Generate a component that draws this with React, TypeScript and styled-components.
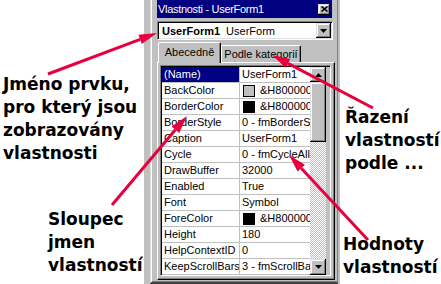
import React from "react";
import styled, { createGlobalStyle } from "styled-components";

const Global = createGlobalStyle`
  html, body { margin: 0; padding: 0; background: #fff; }
`;

const Page = styled.div`
  position: relative;
  width: 441px;
  height: 284px;
  display: flex;
  overflow: hidden;
  background: #fff;
  font-family: "Liberation Sans", Arial, sans-serif;
`;

const NotesColumn = styled.div<{ $width: number }>`
  width: ${(p) => p.$width}px;
  flex: none;
  display: flex;
  flex-direction: column;
`;

const Note = styled.div<{ $top: number; $left: number }>`
  margin-top: ${(p) => p.$top}px;
  padding-left: ${(p) => p.$left}px;
  font-family: "DejaVu Sans", sans-serif;
  font-weight: bold;
  font-size: 17px;
  line-height: 23px;
  color: #000;
  white-space: nowrap;
`;

const Frame = styled.div`
  width: 197px;
  height: 284px;
  flex: none;
  box-sizing: border-box;
  background: #c0c0c0;
  border-left: 1px solid #fff;
  padding: 0 2px 0 6px;
  display: flex;
`;

const Pane = styled.div`
  flex: 1;
  box-sizing: border-box;
  border-left: 1px solid #dfdfdf;
  border-bottom: 2px solid #404040;
  border-right: 1px solid #808080;
  box-shadow: inset 1px 0 #fff, inset 0 -1px #808080;
  padding: 0 4px 2px 6px;
  display: flex;
  flex-direction: column;
`;

const TitleBar = styled.div`
  height: 18px;
  margin-right: 1px;
  background: #000080;
  color: #fff;
  font-size: 11px;
  letter-spacing: -0.3px;
  display: flex;
  align-items: center;
  justify-content: space-between;
  padding: 0 2px 0 1px;
`;

const raised = `
  background: #c0c0c0;
  box-shadow: inset -1px -1px #000, inset 1px 1px #dfdfdf, inset -2px -2px #808080, inset 2px 2px #fff;
`;

const CloseButton = styled.div`
  ${raised}
  width: 12px;
  height: 11px;
  display: flex;
  align-items: center;
  justify-content: center;
`;

const Combo = styled.div`
  margin-top: 3px;
  height: 19px;
  box-sizing: border-box;
  background: #fff;
  border: 1px solid;
  border-color: #808080 #fff #fff #808080;
  box-shadow: inset 1px 1px #000, inset -1px -1px #dfdfdf;
  display: flex;
  align-items: center;
  padding: 1px 1px 1px 4px;
  font-size: 11px;
  color: #000;
`;

const ComboName = styled.span`
  font-weight: bold;
  margin-right: 6px;
`;

const ComboType = styled.span`
  flex: 1;
`;

const DropButton = styled.div`
  ${raised}
  width: 15px;
  height: 15px;
  display: flex;
  align-items: center;
  justify-content: center;
`;

const TabRow = styled.div`
  margin-top: 2px;
  height: 20px;
  display: flex;
  align-items: flex-end;
  padding-left: 1px;
`;

const Tab = styled.div<{ $active?: boolean; $width: number }>`
  position: relative;
  z-index: ${(p) => (p.$active ? 1 : 0)};
  width: ${(p) => p.$width}px;
  height: ${(p) => (p.$active ? 21 : 17)}px;
  margin-bottom: ${(p) => (p.$active ? -1 : 0)}px;
  box-sizing: border-box;
  background: #c0c0c0;
  border-top: 1px solid #fff;
  border-left: 1px solid #fff;
  border-right: 1px solid #000;
  border-radius: 2px 2px 0 0;
  box-shadow: inset -1px 0 #808080;
  font-size: 11px;
  color: #000;
  display: flex;
  align-items: ${(p) => (p.$active ? "flex-start" : "center")};
  padding-top: ${(p) => (p.$active ? 3 : 0)}px;
  justify-content: center;
`;

const TabPanel = styled.div`
  flex: 1;
  margin-right: -2px;
  box-sizing: border-box;
  border-top: 1px solid #fff;
  border-left: 1px solid #fff;
  border-right: 1px solid #000;
  border-bottom: 1px solid #000;
  box-shadow: inset -1px -1px #808080;
  padding: 2px 3px 0 2px;
  overflow: hidden;
`;

const Grid = styled.div`
  display: flex;
  border: 1px solid;
  border-color: #808080 #fff #fff #808080;
  box-shadow: inset 1px 1px #000;
  padding: 1px 0 0 1px;
`;

const Rows = styled.div`
  width: 148px;
  background: #fff;
`;

const Row = styled.div`
  display: flex;
  height: 15px;
  border-bottom: 1px solid #c0c0c0;
  font-size: 11px;
  line-height: 15px;
  color: #000;
`;

const NameCell = styled.div<{ $selected?: boolean }>`
  width: 75px;
  flex: none;
  padding-left: 2px;
  border-right: 1px solid #c0c0c0;
  overflow: hidden;
  white-space: nowrap;
  background: ${(p) => (p.$selected ? "#000080" : "transparent")};
  color: ${(p) => (p.$selected ? "#fff" : "#000")};
`;

const ValueCell = styled.div`
  flex: 1;
  padding-left: 2px;
  overflow: hidden;
  white-space: nowrap;
  display: flex;
  align-items: center;
`;

const Swatch = styled.span<{ $color: string }>`
  flex: none;
  width: 10px;
  height: 10px;
  border: 1px solid #000;
  background: ${(p) => p.$color};
  margin: 0 5px 0 1px;
`;

const ScrollBar = styled.div`
  width: 16px;
  display: flex;
  flex-direction: column;
`;

const ScrollButton = styled.div<{ $height: number }>`
  ${raised}
  height: ${(p) => p.$height}px;
  display: flex;
  align-items: center;
  justify-content: center;
`;

const Track = styled.div`
  flex: 1;
  background: repeating-conic-gradient(#c0c0c0 0 25%, #fff 0 50%) 0 0 / 2px 2px;
`;

type Prop = { name: string; value: string; swatch?: string };

const props: Prop[] = [
  { name: "(Name)", value: "UserForm1" },
  { name: "BackColor", value: "&H8000000F", swatch: "#c0c0c0" },
  { name: "BorderColor", value: "&H80000012", swatch: "#000" },
  { name: "BorderStyle", value: "0 - fmBorderStyleNone" },
  { name: "Caption", value: "UserForm1" },
  { name: "Cycle", value: "0 - fmCycleAllForms" },
  { name: "DrawBuffer", value: "32000" },
  { name: "Enabled", value: "True" },
  { name: "Font", value: "Symbol" },
  { name: "ForeColor", value: "&H80000012", swatch: "#000" },
  { name: "Height", value: "180" },
  { name: "HelpContextID", value: "0" },
  { name: "KeepScrollBarsVisible", value: "3 - fmScrollBarsBoth" },
];

const Tri = ({ up }: { up?: boolean }) => (
  <svg width="7" height="4" viewBox="0 0 7 4">
    <polygon points={up ? "3.5,0 7,4 0,4" : "0,0 7,0 3.5,4"} fill="#000" />
  </svg>
);

const Overlay = styled.svg`
  position: absolute;
  left: 0;
  top: 0;
  pointer-events: none;
`;

const RED = "#e6003e";

const Arrow = ({ x1, y1, x2, y2 }: { x1: number; y1: number; x2: number; y2: number }) => {
  const dx = x2 - x1;
  const dy = y2 - y1;
  const len = Math.hypot(dx, dy);
  const ux = dx / len;
  const uy = dy / len;
  const hl = 18;
  const hw = 5;
  const bx = x2 - ux * hl;
  const by = y2 - uy * hl;
  const pts = `${x2},${y2} ${bx - uy * hw},${by + ux * hw} ${bx + uy * hw},${by - ux * hw}`;
  return (
    <g>
      <line x1={x1} y1={y1} x2={bx} y2={by} stroke={RED} strokeWidth={3} />
      <polygon points={pts} fill={RED} />
    </g>
  );
};

export default function App() {
  return (
    <Page>
      <Global />
      <NotesColumn $width={143}>
        <Note $top={73} $left={3}>
          Jméno prvku,
          <br />
          pro který jsou
          <br />
          zobrazovány
          <br />
          vlastnosti
        </Note>
        <Note $top={43} $left={48}>
          Sloupec
          <br />
          jmen
          <br />
          vlastností
        </Note>
      </NotesColumn>
      <Frame>
        <Pane>
          <TitleBar>
            <span>Vlastnosti - UserForm1</span>
            <CloseButton>
              <svg width="7" height="6" viewBox="0 0 7 6">
                <path d="M0.5 0.5 L6.5 5.5 M6.5 0.5 L0.5 5.5" stroke="#000" strokeWidth="1.6" />
              </svg>
            </CloseButton>
          </TitleBar>
          <Combo>
            <ComboName>UserForm1</ComboName>
            <ComboType>UserForm</ComboType>
            <DropButton>
              <Tri />
            </DropButton>
          </Combo>
          <TabRow>
            <Tab $active $width={63}>
              Abecedně
            </Tab>
            <Tab $width={80}>Podle kategorií</Tab>
          </TabRow>
          <TabPanel>
            <Grid>
              <Rows>
                {props.map((p, i) => (
                  <Row key={p.name}>
                    <NameCell $selected={i === 0}>{p.name}</NameCell>
                    <ValueCell>
                      {p.swatch && <Swatch $color={p.swatch} />}
                      {p.value}
                    </ValueCell>
                  </Row>
                ))}
              </Rows>
              <ScrollBar>
                <ScrollButton $height={15}>
                  <Tri up />
                </ScrollButton>
                <ScrollButton $height={60} />
                <Track />
                <ScrollButton $height={16}>
                  <Tri />
                </ScrollButton>
              </ScrollBar>
            </Grid>
          </TabPanel>
        </Pane>
      </Frame>
      <NotesColumn $width={101}>
        <Note $top={106} $left={5}>
          Řazení
          <br />
          vlastností
          <br />
          podle ...
        </Note>
        <Note $top={58} $left={3}>
          Hodnoty
          <br />
          vlastností
        </Note>
      </NotesColumn>
      <Overlay width={441} height={284} viewBox="0 0 441 284">
        <Arrow x1={48} y1={74} x2={157} y2={33} />
        <Arrow x1={112} y1={205} x2={187} y2={116} />
        <Arrow x1={373} y1={108} x2={272} y2={55} />
        <Arrow x1={368} y1={240} x2={289} y2={155} />
      </Overlay>
    </Page>
  );
}
